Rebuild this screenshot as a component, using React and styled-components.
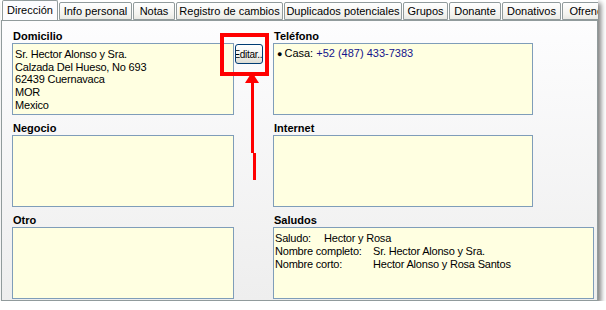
import React from 'react';
import styled, { createGlobalStyle } from 'styled-components';

const GlobalStyle = createGlobalStyle`
  html, body {
    margin: 0;
    padding: 0;
    background: #ffffff;
  }
  body {
    font-family: "Liberation Sans", Arial, sans-serif;
    font-size: 11px;
    color: #000;
  }
`;

const Frame = styled.div`
  position: relative;
  width: 597px;
  margin-left: 1px;
  background: #ffffff;
  box-shadow: 3px 3px 5px rgba(0, 0, 0, 0.5);
`;

const TabBar = styled.div`
  display: flex;
  align-items: flex-end;
  gap: 1px;
  height: 20px;
  padding-left: 1px;
  overflow: hidden;
  position: relative;
  z-index: 1;
`;

const Tab = styled.div`
  flex: none;
  box-sizing: border-box;
  width: ${(p) => p.$w}px;
  height: ${(p) => (p.$active ? 21 : 18)}px;
  margin-bottom: ${(p) => (p.$active ? -1 : 0)}px;
  border: 1px solid #919b9c;
  border-bottom: ${(p) => (p.$active ? 'none' : '1px solid #919b9c')};
  border-radius: 2px 2px 0 0;
  background: ${(p) =>
    p.$active ? '#fcfcfe' : 'linear-gradient(#ffffff, #f3f3ef 70%, #e9e9e4)'};
  display: flex;
  justify-content: center;
  padding-top: ${(p) => (p.$active ? 3 : 2)}px;
  line-height: 13px;
  white-space: nowrap;
  overflow: hidden;
`;

const Panel = styled.div`
  box-sizing: border-box;
  height: 281px;
  border: 1px solid #919b9c;
  background: linear-gradient(#fdfdfe, #eeeeee);
  padding: 9px 0 0 10px;
`;

const Grid = styled.div`
  display: grid;
  grid-template-columns: 222px 39px 321px;
  grid-auto-rows: 85px;
  row-gap: 7px;
`;

const Section = styled.div`
  display: flex;
  flex-direction: column;
  grid-column: ${(p) => p.$col};
`;

const Label = styled.div`
  font-weight: bold;
  line-height: 13px;
  height: 13px;
  padding-left: 1px;
`;

const Box = styled.div`
  box-sizing: border-box;
  width: ${(p) => p.$w}px;
  height: 72px;
  border: 1px solid #7f9db9;
  background: #ffffe1;
  padding: ${(p) => p.$pad || '3px 2px'};
  line-height: ${(p) => p.$lh || 12.6}px;
  letter-spacing: ${(p) => p.$ls || 0}px;
  overflow: hidden;
`;

const EditCell = styled.div`
  grid-column: 2;
  padding: 14px 0 0 1px;
`;

const EditButton = styled.button`
  box-sizing: border-box;
  width: 28px;
  height: 20px;
  padding: 0;
  border: 1px solid #003c74;
  border-radius: 3px;
  background: linear-gradient(#ffffff, #f2f2ee 60%, #dcdcd4);
  font-family: "Liberation Sans", Arial, sans-serif;
  font-size: 10px;
  letter-spacing: -0.3px;
  color: #000;
  display: flex;
  align-items: center;
  justify-content: center;
  overflow: hidden;
  white-space: nowrap;
`;

const Phone = styled.div`
  padding-left: 1px;
`;

const Bullet = styled.span`
  font-size: 9px;
  margin-right: 2px;
`;

const Number = styled.span`
  color: #14148c;
`;

const SalRow = styled.div`
  display: flex;
  white-space: nowrap;
`;

const SalKey = styled.span`
  flex: none;
  width: ${(p) => p.$w}px;
`;

const Overlay = styled.svg`
  position: absolute;
  left: -1px;
  top: 0;
  pointer-events: none;
  z-index: 2;
`;

const tabs = [
  { name: 'Dirección', w: 56, active: true },
  { name: 'Info personal', w: 73 },
  { name: 'Notas', w: 42 },
  { name: 'Registro de cambios', w: 107 },
  { name: 'Duplicados potenciales', w: 118 },
  { name: 'Grupos', w: 45 },
  { name: 'Donante', w: 52 },
  { name: 'Donativos', w: 59 },
  { name: 'Ofrendas', w: 60 },
];

const address = [
  'Sr. Hector Alonso y Sra.',
  'Calzada Del Hueso, No 693',
  '62439 Cuernavaca',
  'MOR',
  'Mexico',
];

const saludos = [
  { k: 'Saludo:', w: 49, v: 'Hector y Rosa' },
  { k: 'Nombre completo:', w: 98, v: 'Sr. Hector Alonso y Sra.' },
  { k: 'Nombre corto:', w: 98, v: 'Hector Alonso y Rosa Santos' },
];

export default function App() {
  return (
    <>
      <GlobalStyle />
      <Frame>
        <TabBar>
          {tabs.map((t) => (
            <Tab key={t.name} $w={t.w} $active={t.active}>
              {t.name}
            </Tab>
          ))}
        </TabBar>
        <Panel>
          <Grid>
            <Section $col={1}>
              <Label>Domicilio</Label>
              <Box $w={222} $ls={-0.2} $pad="4px 2px" $lh={12.7}>
                {address.map((line) => (
                  <div key={line}>{line}</div>
                ))}
              </Box>
            </Section>
            <EditCell>
              <EditButton>Editar...</EditButton>
            </EditCell>
            <Section $col={3}>
              <Label>Teléfono</Label>
              <Box $w={260}>
                <Phone>
                  <Bullet>●</Bullet>Casa: <Number>+52 (487) 433-7383</Number>
                </Phone>
              </Box>
            </Section>

            <Section $col={1}>
              <Label>Negocio</Label>
              <Box $w={222} />
            </Section>
            <Section $col={3}>
              <Label>Internet</Label>
              <Box $w={260} />
            </Section>

            <Section $col={1}>
              <Label>Otro</Label>
              <Box $w={222} />
            </Section>
            <Section $col={3}>
              <Label>Saludos</Label>
              <Box $w={321} $pad="4px 1px" $lh={13} $ls={-0.2}>
                {saludos.map((s) => (
                  <SalRow key={s.k}>
                    <SalKey $w={s.w}>{s.k}</SalKey>
                    {s.v}
                  </SalRow>
                ))}
              </Box>
            </Section>
          </Grid>
        </Panel>
        <Overlay width="606" height="310" viewBox="0 0 606 310">
          <rect x="222" y="35" width="45" height="39" fill="none" stroke="#ff0000" strokeWidth="4" />
          <polygon points="252,72 245,83 259,83" fill="#ff0000" />
          <rect x="251" y="82" width="3" height="71" fill="#ff0000" />
          <rect x="253" y="153" width="3" height="27" fill="#ff0000" />
        </Overlay>
      </Frame>
    </>
  );
}
